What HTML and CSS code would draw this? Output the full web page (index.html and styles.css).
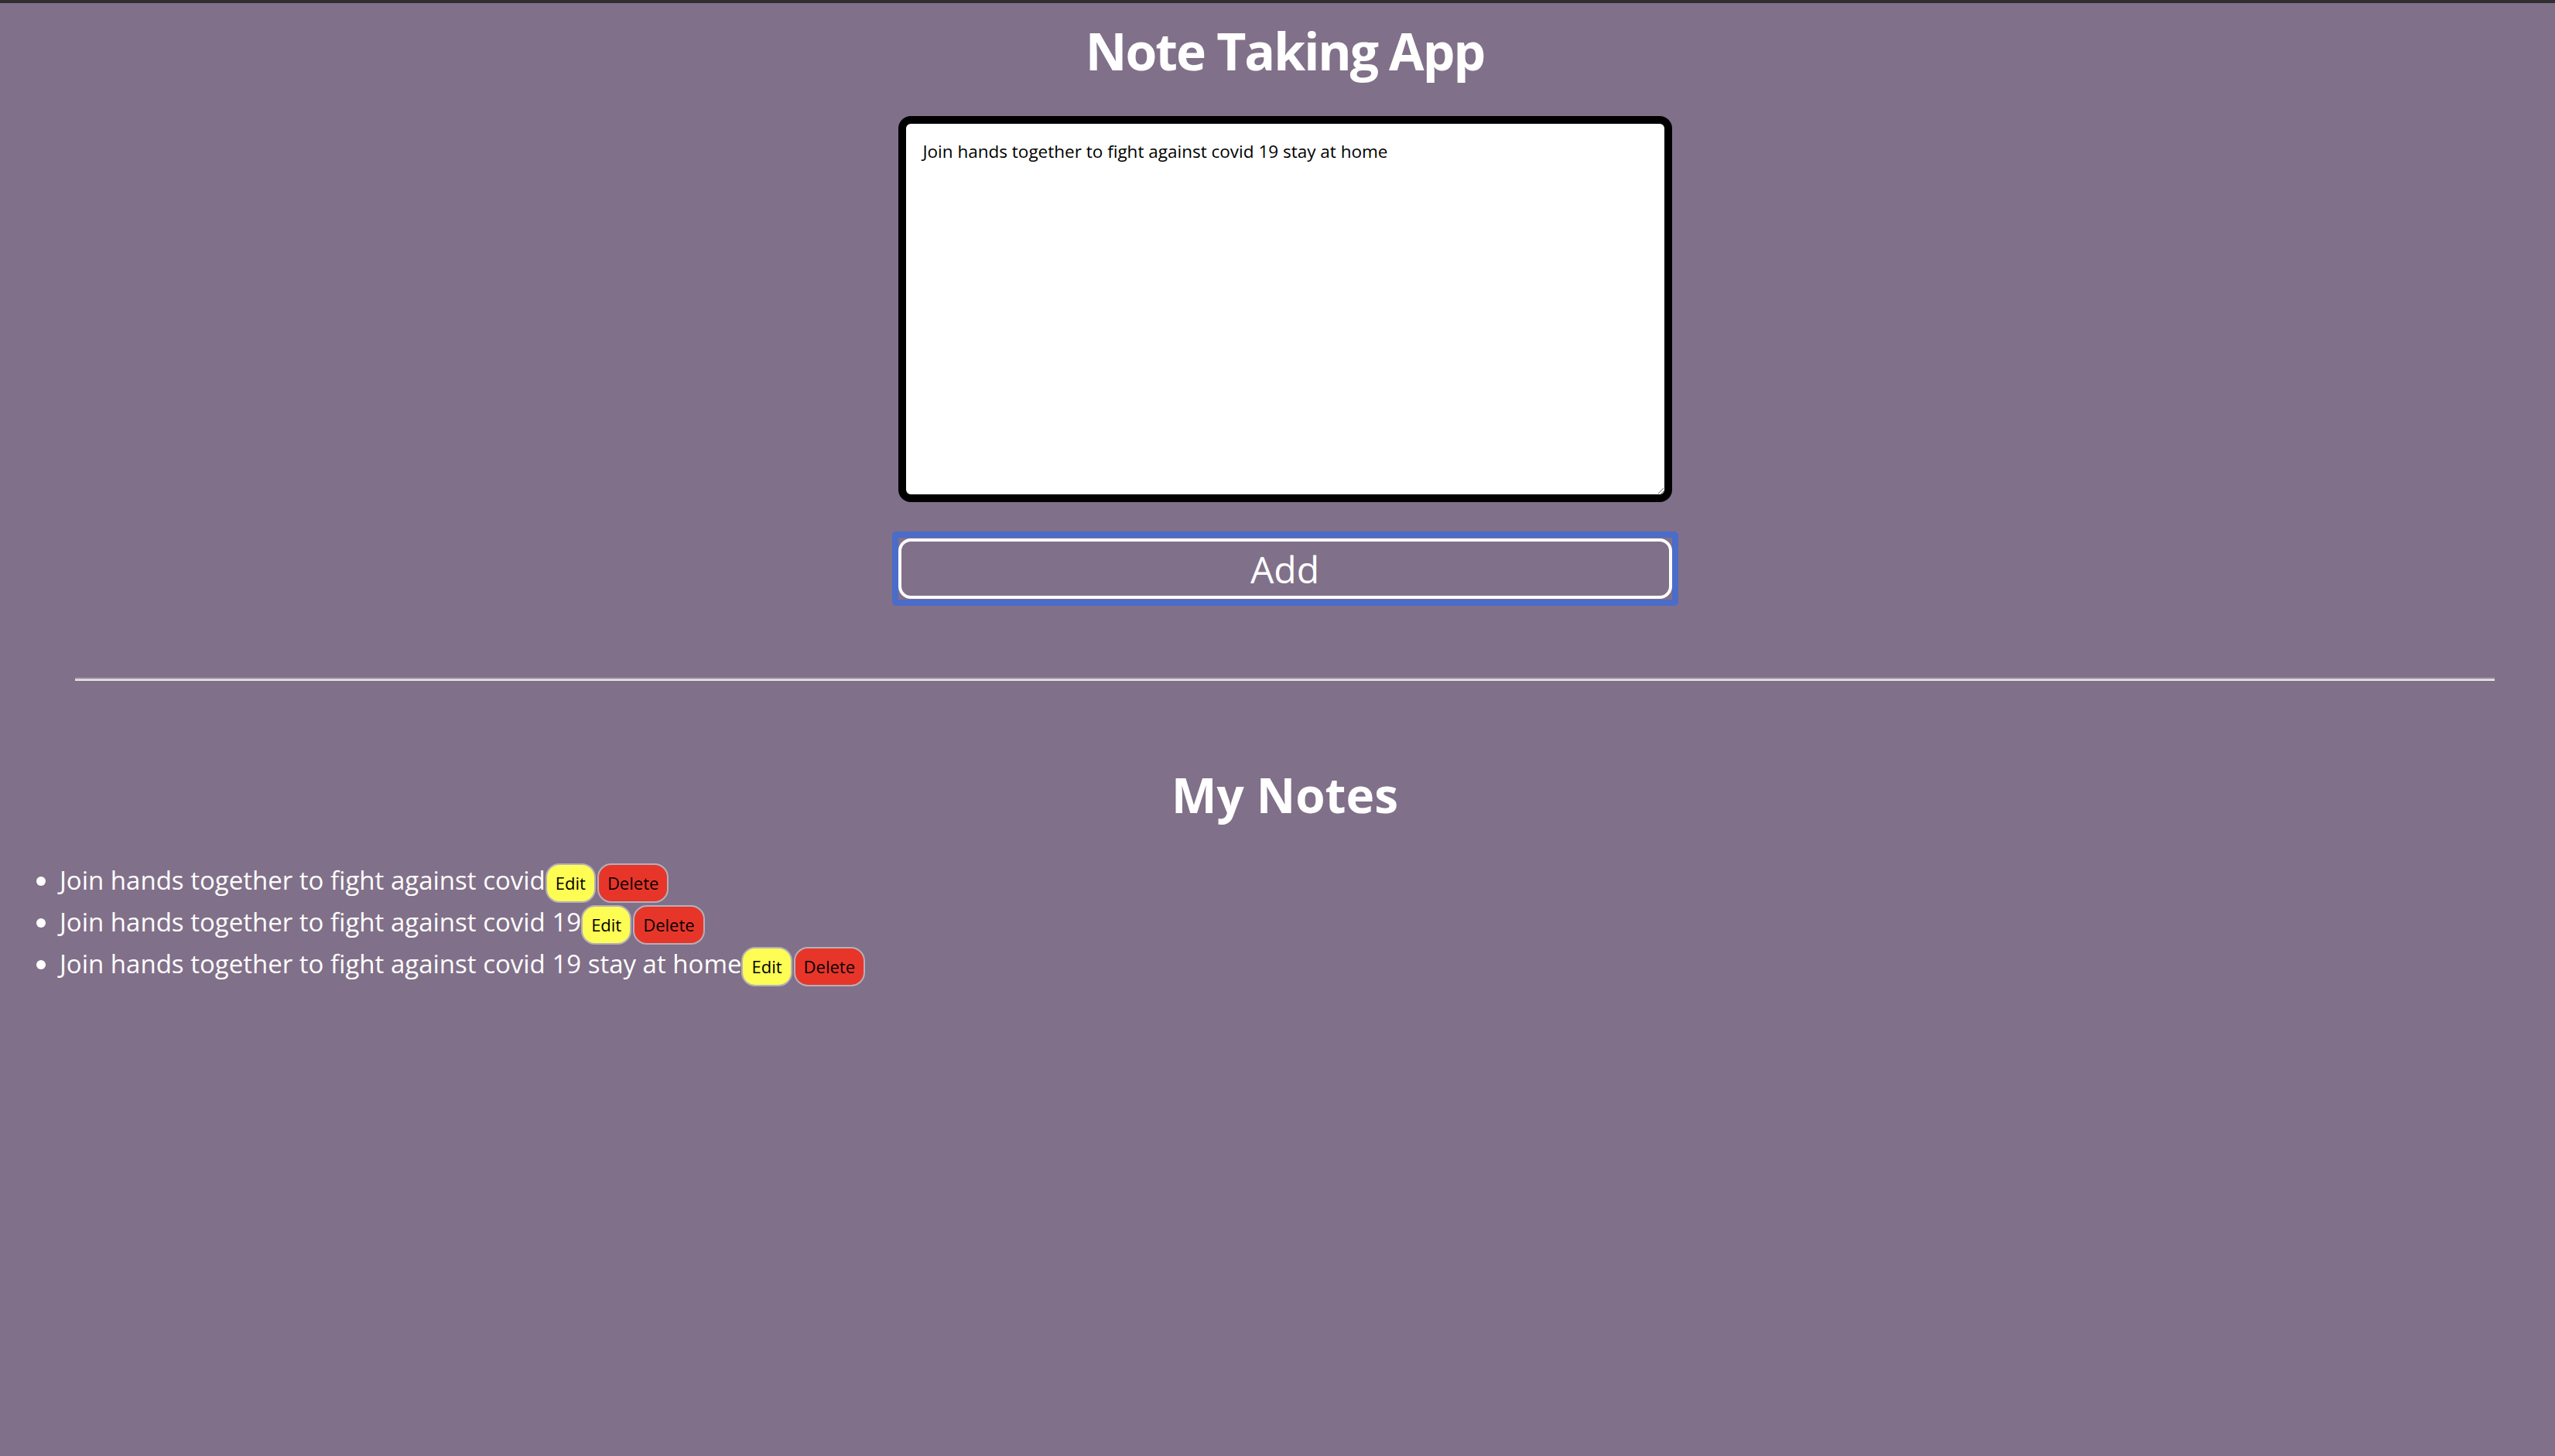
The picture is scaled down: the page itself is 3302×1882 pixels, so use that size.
FILE: index.html
```html
<!DOCTYPE html>
<html lang="en">
<head>
<meta charset="utf-8">
<title>Note Taking App</title>
<link rel="stylesheet" href="styles.css">
</head>
<body>
<div class="topbar"></div>
<main class="app">
  <h1 class="title">Note Taking App</h1>
  <section class="composer">
    <textarea class="note-input" spellcheck="false">Join hands together to fight against covid 19 stay at home</textarea>
    <div class="add-focus"><button class="add-btn">Add</button></div>
  </section>
  <hr class="divider">
  <h2 class="notes-title">My Notes</h2>
  <ul class="notes">
    <li>Join hands together to fight against covid<button class="btn edit">Edit</button><button class="btn delete">Delete</button></li>
    <li>Join hands together to fight against covid 19<button class="btn edit">Edit</button><button class="btn delete">Delete</button></li>
    <li>Join hands together to fight against covid 19 stay at home<button class="btn edit">Edit</button><button class="btn delete">Delete</button></li>
  </ul>
</main>
</body>
</html>
```
FILE: styles.css
```css
html, body {
  margin: 0;
  padding: 0;
  background: #817089;
  min-height: 100%;
}
body {
  font-family: "Open Sans", "DejaVu Sans", sans-serif;
  color: #ffffff;
}
.topbar {
  height: 4px;
  background: #2f2f2f;
}
.app {
  padding-left: 19px;
}
.title {
  margin: 21px 0 0 0;
  font-size: 66px;
  line-height: 80px;
  font-weight: 700;
  letter-spacing: -2px;
  text-align: center;
}
.composer {
  display: flex;
  flex-direction: column;
  align-items: center;
  margin-top: 45px;
}
.note-input {
  box-sizing: border-box;
  width: 1000px;
  height: 499px;
  border: 10px solid #000;
  border-radius: 16px;
  padding: 20px 22px;
  background: #fff;
  color: #000;
  font-family: "Open Sans", "DejaVu Sans", sans-serif;
  font-size: 22.5px;
  outline: none;
  margin: 0;
  resize: both;
}
.add-focus {
  margin-top: 38px;
  border: 8px solid #4b6cc9;
  border-radius: 5px;
  padding: 1px 0;
  display: flex;
}
.add-btn {
  box-sizing: border-box;
  width: 1000px;
  height: 78px;
  border: 4px solid #fff;
  border-radius: 16px;
  background: transparent;
  color: #fff;
  font-family: "Open Sans", "DejaVu Sans", sans-serif;
  font-size: 48px;
  padding: 0;
  cursor: pointer;
}
.divider {
  margin: 93px 78px 0 78px;
  border: none;
  border-top: 2px solid #a9a6ac;
  border-bottom: 2px solid #ececec;
  height: 0;
}
.notes-title {
  margin: 110px 0 0 0;
  font-size: 62px;
  line-height: 74px;
  font-weight: 700;
  text-align: center;
}
.notes {
  margin: 49px 0 0 0;
  padding-left: 58px;
  list-style: disc;
}
.notes li {
  font-size: 33px;
  line-height: 50px;
}
.btn {
  display: inline-block;
  vertical-align: baseline;
  box-sizing: border-box;
  height: 51px;
  padding: 9px 11px;
  border: 2px solid #b4b0b8;
  border-radius: 18px;
  font-family: "Open Sans", "DejaVu Sans", sans-serif;
  font-size: 22px;
  line-height: 29px;
  color: #000;
  cursor: pointer;
}
.edit {
  background: #fdfd54;
}
.delete {
  background: #e8352a;
  margin-left: 2px;
}
```
